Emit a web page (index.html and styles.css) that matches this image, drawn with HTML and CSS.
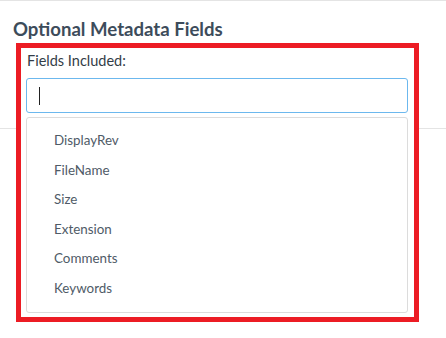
FILE: index.html
```html
<!DOCTYPE html>
<html>
<head>
<meta charset="utf-8">
<link rel="stylesheet" href="styles.css">
</head>
<body>
<div class="page">
  <div class="divider"></div>
  <h2 class="title">Optional Metadata Fields</h2>
  <div class="highlight">
    <label class="label">Fields Included:</label>
    <div class="input"><span class="caret"></span></div>
    <ul class="menu">
      <li>DisplayRev</li>
      <li>FileName</li>
      <li>Size</li>
      <li>Extension</li>
      <li>Comments</li>
      <li>Keywords</li>
    </ul>
  </div>
</div>
</body>
</html>
```
FILE: styles.css
```css
html, body {
  margin: 0;
  padding: 0;
  background: #fff;
}
body {
  font-family: "Lato", "Open Sans", sans-serif;
  width: 446px;
  height: 338px;
  overflow: hidden;
}
.page {
  position: relative;
  border-top: 1px solid #e4e4e4;
  height: 337px;
}
.divider {
  position: absolute;
  left: 0;
  right: 0;
  top: 127px;
  height: 1px;
  background: #e4e4e4;
}
.title {
  margin: 0;
  padding: 16px 0 0 13px;
  height: 26px;
  font-size: 18.6px;
  line-height: 24px;
  font-weight: 700;
  color: #3d4c5b;
}
.highlight {
  position: relative;
  z-index: 1;
  margin-left: 16px;
  border: 5px solid #ec1c24;
  background: #fff;
  padding: 0 6px 4px 5px;
  box-sizing: content-box;
  width: 382px;
}
.label {
  display: block;
  padding: 3px 0 0 1px;
  font-size: 14.5px;
  line-height: 20px;
  color: #333d47;
  margin-bottom: 7px;
}
.input {
  height: 33px;
  border: 1px solid #6cb8ee;
  border-radius: 3px;
  display: flex;
  align-items: center;
  padding-left: 12px;
}
.caret {
  width: 1px;
  height: 18px;
  background: #222;
}
.menu {
  list-style: none;
  margin: 4px 0 0;
  padding: 8px 0 9px 27px;
  border: 1px solid #dcdcdc;
  border-radius: 3px;
}
.menu li {
  font-size: 13.4px;
  line-height: 29.5px;
  color: #4f5b67;
}
```
